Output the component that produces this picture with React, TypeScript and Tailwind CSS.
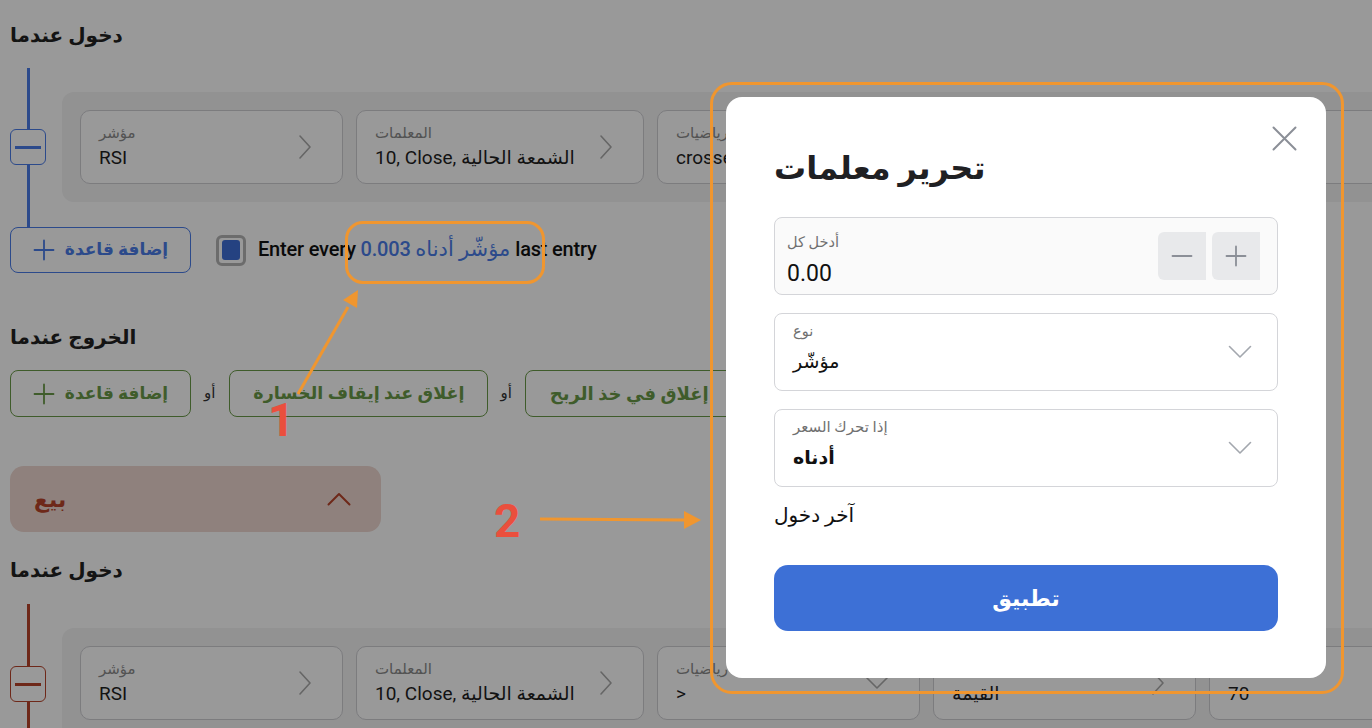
import React from "react";

function ChevronRight({ className }: { className?: string }) {
  return (
    <svg width="14" height="26" viewBox="0 0 14 26" className={className}>
      <polyline points="2,2 12,13 2,24" fill="none" stroke="currentColor" strokeWidth="1.6" strokeLinecap="round" strokeLinejoin="round" />
    </svg>
  );
}

function ChevronDown({ className }: { className?: string }) {
  return (
    <svg width="24" height="14" viewBox="0 0 24 14" className={className}>
      <polyline points="1.5,1.5 12,12 22.5,1.5" fill="none" stroke="currentColor" strokeWidth="1.6" strokeLinecap="round" strokeLinejoin="round" />
    </svg>
  );
}

function PlusIcon({ className, size = 22 }: { className?: string; size?: number }) {
  return (
    <svg width={size} height={size} viewBox="0 0 22 22" className={className}>
      <path d="M11 1.5V20.5M1.5 11H20.5" fill="none" stroke="currentColor" strokeWidth="1.8" strokeLinecap="round" />
    </svg>
  );
}

function Card({
  className,
  label,
  value,
  chevron,
}: {
  className: string;
  label: string;
  value: string;
  chevron?: "right" | "down";
}) {
  return (
    <div
      className={
        "h-[74px] shrink-0 rounded-[10px] border border-[#cfcfd3] bg-white pl-[18px] pr-[30px] flex items-center justify-between overflow-hidden " +
        className
      }
    >
      <div className="flex flex-col min-w-0">
        <span className="text-[15px] leading-[18px] text-[#8a8a8a] whitespace-nowrap">{label}</span>
        <span className="text-[19px] leading-[24px] text-[#1f1f1f] mt-[4px] whitespace-nowrap">{value}</span>
      </div>
      {chevron === "right" && <ChevronRight className="text-[#aaaaaa] shrink-0" />}
      {chevron === "down" && <ChevronDown className="text-[#aaaaaa] shrink-0" />}
    </div>
  );
}

function RuleBlock({
  lineClass,
  boxClass,
  barClass,
  third,
  fourth,
  fifth,
  topLine,
  bottomLine,
}: {
  lineClass: string;
  boxClass: string;
  barClass: string;
  third: { label: string; value: string; chevron: "right" | "down" };
  fourth: { label: string; value: string };
  fifth: { label: string; value: string };
  topLine: string;
  bottomLine: string;
}) {
  return (
    <div className="flex">
      <div className="w-[36px] flex flex-col items-center shrink-0">
        <div className={"w-[3px] " + topLine + " " + lineClass} />
        <div className={"w-[36px] h-[36px] rounded-[6px] border-[1.5px] flex items-center justify-center " + boxClass}>
          <div className={"w-[26px] h-[3px] " + barClass} />
        </div>
        <div className={"w-[3px] " + bottomLine + " " + lineClass} />
      </div>
      <div className="ml-[16px] mt-[24px] h-[110px] w-[1400px] shrink-0 rounded-[12px] bg-[#f3f3f4] p-[18px] flex gap-[13px]">
        <Card className="w-[263px]" label="مؤشر" value="RSI" chevron="right" />
        <Card className="w-[288px]" label="المعلمات" value="10, Close, الشمعة الحالية" chevron="right" />
        <Card className="w-[263px]" label={third.label} value={third.value} chevron={third.chevron} />
        <Card className="w-[263px]" label={fourth.label} value={fourth.value} chevron="right" />
        <Card className="w-[263px]" label={fifth.label} value={fifth.value} />
      </div>
    </div>
  );
}

function Heading({ children, className = "" }: { children: React.ReactNode; className?: string }) {
  return <div className={"text-[20px] leading-[28px] font-bold text-[#222222] " + className}>{children}</div>;
}

export default function App() {
  return (
    <div className="relative w-[1372px] h-[728px] overflow-hidden bg-white font-['Roboto','DejaVu_Sans',sans-serif]">
      {/* underlying page */}
      <div className="px-[10px] pt-[21px]">
        <Heading>دخول عندما</Heading>

        <div className="mt-[19px]">
          <RuleBlock
            lineClass="bg-[#4a7ce8]"
            boxClass="border-[#4a7ce8]"
            barClass="bg-[#4a7ce8]"
            topLine="h-[61px]"
            bottomLine="h-[62px]"
            third={{ label: "رياضيات", value: "crosses", chevron: "down" }}
            fourth={{ label: "القيمة", value: "القيمة" }}
            fifth={{ label: "القيمة", value: "30" }}
          />
        </div>

        <div className="flex items-center">
          <div className="w-[181px] h-[46px] rounded-[8px] border border-[#4a7ce8] flex items-center justify-center gap-[10px] text-[#4a7ce8] font-bold text-[17px]">
            <PlusIcon />
            <span>إضافة قاعدة</span>
          </div>
          <div className="ml-[25px] w-[30px] h-[31px] rounded-[6px] border-[3px] border-[#b4b4b4] flex items-center justify-center">
            <div className="w-[18px] h-[20px] rounded-[3px] bg-[#3f6fd8]" />
          </div>
          <div className="ml-[12px] text-[20px] font-medium text-[#111111] whitespace-nowrap tracking-[-0.2px]">
            Enter every <span className="text-[#4a7ce8]">0.003 <span className="text-[21px]">مؤشّر أدناه</span></span> last entry
          </div>
        </div>

        <Heading className="mt-[50px]">الخروج عندما</Heading>

        <div className="mt-[19px] flex items-center">
          <div className="w-[181px] h-[47px] shrink-0 rounded-[8px] border border-[#6a9a48] flex items-center justify-center gap-[10px] text-[#6a9a48] font-bold text-[17px]">
            <PlusIcon />
            <span>إضافة قاعدة</span>
          </div>
          <span className="ml-[13px] mr-[14px] text-[15px] text-[#333333]">أو</span>
          <div className="h-[47px] w-[259px] shrink-0 rounded-[8px] border border-[#6a9a48] flex items-center justify-center text-[#6a9a48] font-bold text-[17.5px] whitespace-nowrap">
            إغلاق عند إيقاف الخسارة
          </div>
          <span className="ml-[12px] mr-[13px] text-[15px] text-[#333333]">أو</span>
          <div className="h-[47px] shrink-0 rounded-[8px] border border-[#6a9a48] px-[24px] flex items-center text-[#6a9a48] font-bold text-[18px] whitespace-nowrap">
            إغلاق في خذ الربح
          </div>
        </div>

        <div className="mt-[49px] w-[371px] h-[66px] rounded-[14px] bg-[#eed7d0] pl-[24px] pr-[30px] flex items-center justify-between">
          <span className="text-[22px] font-bold text-[#b7432a]">بيع</span>
          <svg width="24" height="14" viewBox="0 0 24 14" className="text-[#b7432a]">
            <polyline points="1.5,12.5 12,2 22.5,12.5" fill="none" stroke="currentColor" strokeWidth="2" strokeLinecap="round" strokeLinejoin="round" />
          </svg>
        </div>

        <Heading className="mt-[24px]">دخول عندما</Heading>

        <div className="mt-[20px]">
          <RuleBlock
            lineClass="bg-[#b7432a]"
            boxClass="border-[#b7432a]"
            barClass="bg-[#b7432a]"
            topLine="h-[62px]"
            bottomLine="h-[62px]"
            third={{ label: "رياضيات", value: ">", chevron: "down" }}
            fourth={{ label: "القيمة", value: "القيمة" }}
            fifth={{ label: "القيمة", value: "70" }}
          />
        </div>
      </div>

      {/* dim overlay */}
      <div className="absolute inset-0 bg-black/40" />

      {/* modal */}
      <div className="absolute left-[726px] top-[97px] w-[600px] h-[581px] rounded-[16px] bg-white px-[48px] pt-[50px]">
        <svg width="25" height="25" viewBox="0 0 25 25" className="absolute top-[29px] right-[29px] text-[#8b8f97]">
          <path d="M1.5 1.5L23.5 23.5M23.5 1.5L1.5 23.5" fill="none" stroke="currentColor" strokeWidth="2" strokeLinecap="round" />
        </svg>
        <div className="text-[32px] leading-[42px] font-bold text-[#1f2023]">تحرير معلمات</div>

        <div className="mt-[28px] h-[78px] rounded-[8px] border border-[#d4d5d9] bg-[#fafafa] pl-[12px] pr-[17px] flex items-center justify-between">
          <div className="self-start pt-[16px] flex flex-col">
            <span className="text-[14.5px] leading-[18px] text-[#707070]">أدخل كل</span>
            <span className="text-[23px] leading-[28px] text-[#111111] mt-[8px]">0.00</span>
          </div>
          <div className="flex gap-[6px]">
            <div className="w-[48px] h-[48px] rounded-l-[6px] bg-[#e8e9eb] flex items-center justify-center text-[#8b8f97]">
              <svg width="22" height="22" viewBox="0 0 22 22">
                <path d="M1.5 11H20.5" fill="none" stroke="currentColor" strokeWidth="1.8" strokeLinecap="round" />
              </svg>
            </div>
            <div className="w-[48px] h-[48px] rounded-l-[6px] bg-[#e8e9eb] flex items-center justify-center text-[#8b8f97]">
              <PlusIcon />
            </div>
          </div>
        </div>

        <div className="mt-[18px] h-[78px] rounded-[8px] border border-[#d4d5d9] bg-white pl-[18px] pr-[25px] flex items-center justify-between">
          <div className="self-start pt-[9px] flex flex-col">
            <span className="text-[14.5px] leading-[18px] text-[#707070]">نوع</span>
            <span className="text-[19px] leading-[26px] font-medium text-[#111111] mt-[8px]">مؤشّر</span>
          </div>
          <ChevronDown className="text-[#a3a7ae]" />
        </div>

        <div className="mt-[18px] h-[78px] rounded-[8px] border border-[#d4d5d9] bg-white pl-[18px] pr-[25px] flex items-center justify-between">
          <div className="self-start pt-[8px] flex flex-col">
            <span className="text-[15px] leading-[18px] text-[#707070]">إذا تحرك السعر</span>
            <span className="text-[19px] leading-[26px] font-semibold text-[#111111] mt-[9px]">أدناه</span>
          </div>
          <ChevronDown className="text-[#a3a7ae]" />
        </div>

        <div className="mt-[14px] text-[20px] leading-[28px] text-[#111111]">آخر دخول</div>

        <div className="mt-[36px] h-[66px] rounded-[14px] bg-[#3d70d6] flex items-center justify-center text-white text-[22px] font-semibold">
          تطبيق
        </div>
      </div>

      {/* annotations */}
      <div className="absolute left-[710px] top-[82px] w-[634px] h-[612px] rounded-[22px] border-[3px] border-[#f0962f]" />
      <div className="absolute left-[345px] top-[221px] w-[200px] h-[63px] rounded-[18px] border-[3px] border-[#f0962f]" />
      <svg className="absolute left-0 top-0 pointer-events-none" width="1372" height="728" viewBox="0 0 1372 728">
        <line x1="298" y1="394" x2="348" y2="307" stroke="#f0962f" strokeWidth="3" />
        <polygon points="358,290 357,308 343,300" fill="#f0962f" />
        <line x1="540" y1="519" x2="686" y2="520" stroke="#f0962f" strokeWidth="3" />
        <polygon points="701,520 684,511 684,529" fill="#f0962f" />
      </svg>
      <div className="absolute left-[268px] top-[397px] text-[46px] leading-[46px] font-bold text-[#ea4f3d] font-['Roboto',sans-serif]">1</div>
      <div className="absolute left-[494px] top-[498px] text-[46px] leading-[46px] font-bold text-[#ea4f3d] font-['Roboto',sans-serif]">2</div>
    </div>
  );
}
